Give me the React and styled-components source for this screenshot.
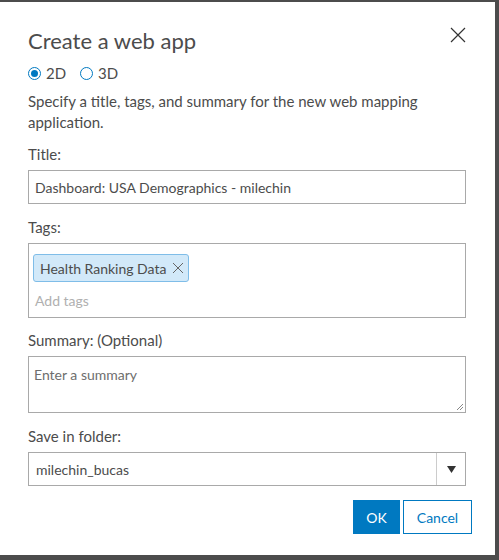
import React from 'react';
import styled, { createGlobalStyle } from 'styled-components';

const GlobalStyle = createGlobalStyle`
  html, body {
    margin: 0;
    padding: 0;
    background: #4c4c4c;
  }
  body {
    font-family: Lato, "Open Sans", sans-serif;
    color: #4c4c4c;
  }
`;

const Dialog = styled.div`
  box-sizing: border-box;
  width: 495px;
  height: 553px;
  margin-top: 2px;
  background: #fff;
  padding: 23px 28px 0 28px;
`;

const Header = styled.div`
  display: flex;
  justify-content: space-between;
  align-items: flex-start;
`;

const Heading = styled.h2`
  margin: 0;
  font-size: 22px;
  font-weight: 400;
  line-height: 32px;
  color: #4c4c4c;
`;

const CloseButton = styled.button`
  border: none;
  background: none;
  padding: 0;
  margin: 2px 1px 0 0;
  width: 16px;
  height: 16px;
  cursor: pointer;
  svg { display: block; }
`;

const RadioRow = styled.div`
  display: flex;
  align-items: center;
  gap: 14px;
  margin-top: 6px;
`;

const RadioLabel = styled.label`
  display: flex;
  align-items: center;
  gap: 5px;
  font-size: 15px;
  line-height: 20px;
`;

const RadioDot = styled.span`
  box-sizing: border-box;
  width: 13px;
  height: 13px;
  border-radius: 50%;
  border: 1.5px solid #0079c1;
  display: flex;
  align-items: center;
  justify-content: center;
  &::after {
    content: '';
    display: ${({ checked }) => (checked ? 'block' : 'none')};
    width: 7px;
    height: 7px;
    border-radius: 50%;
    background: #0079c1;
  }
`;

const Description = styled.p`
  margin: 8px 0 0;
  font-size: 15px;
  line-height: 21px;
`;

const Label = styled.div`
  font-size: 15px;
  line-height: 20px;
  margin-top: ${({ top }) => top || 13}px;
  margin-bottom: 6px;
`;

const TextInput = styled.div`
  box-sizing: border-box;
  width: 438px;
  height: 34px;
  border: 1px solid #a9a9a9;
  padding: 0 6px;
  display: flex;
  align-items: center;
  font-size: 14px;
  color: #4c4c4c;
`;

const TagBox = styled.div`
  box-sizing: border-box;
  width: 438px;
  height: 75px;
  border: 1px solid #a9a9a9;
  padding: 10px 4px 0;
  display: flex;
  flex-direction: column;
  align-items: flex-start;
`;

const Tag = styled.span`
  box-sizing: border-box;
  height: 28px;
  display: inline-flex;
  align-items: center;
  gap: 6px;
  padding: 0 4px 0 6px;
  background: #d2e9f9;
  border: 1px solid #7fbde8;
  border-radius: 3px;
  font-size: 14px;
  color: #4c4c4c;
`;

const Placeholder = styled.span`
  font-size: 14px;
  color: #b0b0b0;
  margin-top: 10px;
  padding-left: 2px;
`;

const TextArea = styled.div`
  box-sizing: border-box;
  width: 438px;
  height: 57px;
  border: 1px solid #a9a9a9;
  padding: 9px 5px;
  font-size: 14px;
  color: #6e6e6e;
  position: relative;
`;

const ResizeGrip = styled.svg`
  position: absolute;
  right: 1px;
  bottom: 1px;
`;

const Select = styled.div`
  box-sizing: border-box;
  width: 438px;
  height: 34px;
  border: 1px solid #a9a9a9;
  display: flex;
  font-size: 14px;
`;

const SelectValue = styled.div`
  flex: 1;
  display: flex;
  align-items: center;
  padding-left: 7px;
  border-right: 1px solid #cccccc;
`;

const SelectArrow = styled.div`
  width: 28px;
  display: flex;
  align-items: center;
  justify-content: center;
`;

const Footer = styled.div`
  display: flex;
  justify-content: flex-end;
  gap: 3px;
  margin-top: 14px;
  margin-right: -5px;
`;

const Button = styled.button`
  box-sizing: border-box;
  width: ${({ width }) => width}px;
  height: 34px;
  padding: 0;
  font-family: inherit;
  font-size: 14px;
  border: 1px solid #0079c1;
  background: ${({ primary }) => (primary ? '#0079c1' : '#fff')};
  color: ${({ primary }) => (primary ? '#fff' : '#0079c1')};
  cursor: pointer;
`;

export default function App() {
  return (
    <>
      <GlobalStyle />
      <Dialog>
        <Header>
          <Heading>Create a web app</Heading>
          <CloseButton aria-label="Close">
            <svg width="16" height="16" viewBox="0 0 16 16">
              <path d="M1 1L15 15M15 1L1 15" stroke="#333" strokeWidth="1.2" fill="none" />
            </svg>
          </CloseButton>
        </Header>
        <RadioRow>
          <RadioLabel><RadioDot checked />2D</RadioLabel>
          <RadioLabel><RadioDot />3D</RadioLabel>
        </RadioRow>
        <Description>
          Specify a title, tags, and summary for the new web mapping application.
        </Description>
        <Label top={11}>Title:</Label>
        <TextInput>Dashboard: USA Demographics - milechin</TextInput>
        <Label>Tags:</Label>
        <TagBox>
          <Tag>
            Health Ranking Data
            <svg width="12" height="12" viewBox="0 0 12 12">
              <path d="M1 1L11 11M11 1L1 11" stroke="#666" strokeWidth="1" fill="none" />
            </svg>
          </Tag>
          <Placeholder>Add tags</Placeholder>
        </TagBox>
        <Label top={12}>Summary: (Optional)</Label>
        <TextArea>
          Enter a summary
          <ResizeGrip width="9" height="9" viewBox="0 0 9 9">
            <path d="M8 2L2 8M8 5L5 8" stroke="#888" strokeWidth="1" fill="none" />
          </ResizeGrip>
        </TextArea>
        <Label>Save in folder:</Label>
        <Select>
          <SelectValue>milechin_bucas</SelectValue>
          <SelectArrow>
            <svg width="9" height="7" viewBox="0 0 9 7">
              <path d="M0 0H9L4.5 7Z" fill="#333" />
            </svg>
          </SelectArrow>
        </Select>
        <Footer>
          <Button primary width={47}>OK</Button>
          <Button width={69}>Cancel</Button>
        </Footer>
      </Dialog>
    </>
  );
}
